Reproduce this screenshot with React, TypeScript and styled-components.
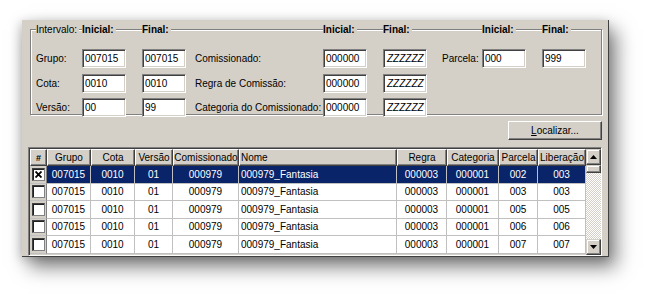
import styled, { createGlobalStyle } from "styled-components";

const GlobalStyle = createGlobalStyle`
  html, body {
    margin: 0;
    padding: 0;
    background: #ffffff;
  }
  body {
    font-family: "Liberation Sans", Arial, sans-serif;
    font-size: 10px;
    color: #000000;
  }
`;

const FACE = "#d4d0c8";
const SHADOW = "#808080";
const DARK = "#404040";
const COLS = "17px 44px 44px 38px 66px 158px 50px 52px 39px 48px";

const Page = styled.div`
  width: 652px;
  height: 299px;
  padding: 20px 0 0 22px;
  box-sizing: border-box;
  overflow: hidden;
`;

const Window = styled.div`
  width: 587px;
  height: 237px;
  box-sizing: border-box;
  background: ${FACE};
  border-right: 1px solid ${DARK};
  border-bottom: 1px solid ${DARK};
  box-shadow: 7px 10px 18px rgba(0, 0, 0, 0.5), -2px 2px 10px rgba(0, 0, 0, 0.18);
  padding: 9px 6px 0 6px;
  display: flex;
  flex-direction: column;
`;

const GroupBox = styled.div`
  margin-left: 2px;
  height: 86px;
  box-sizing: border-box;
  border: 1px solid ${SHADOW};
  box-shadow: 1px 1px 0 #ffffff, inset 1px 1px 0 #ffffff;
  padding: 0 0 0 5px;
  display: grid;
  grid-template-columns: 46px 60px 53px 128px 60px 59px 40px 60px 44px;
  grid-template-rows: 14px 20px 20px 20px;
  row-gap: 4.5px;
  align-items: center;
`;

const Legend = styled.span<{ $bold?: boolean }>`
  margin-top: -15px;
  align-self: start;
  justify-self: start;
  background: ${FACE};
  padding-right: 2px;
  white-space: nowrap;
  font-weight: ${(p) => (p.$bold ? "bold" : "normal")};
  line-height: 14px;
  position: relative;
  top: 8px;
`;

const Label = styled.span`
  white-space: nowrap;
`;

const Field = styled.div<{ $italic?: boolean }>`
  width: 44px;
  height: 19px;
  box-sizing: border-box;
  background: #ffffff;
  border: 1px solid;
  border-color: ${SHADOW} #ffffff #ffffff ${SHADOW};
  box-shadow: inset 1px 1px 0 ${DARK}, inset -1px -1px 0 ${FACE};
  padding: ${(p) => (p.$italic ? "2px 0 0 3px" : "2px 0 0 2px")};
  line-height: 14px;
  font-style: ${(p) => (p.$italic ? "italic" : "normal")};
  overflow: hidden;
  white-space: nowrap;
`;

const Toolbar = styled.div`
  display: flex;
  justify-content: flex-end;
  margin-top: 6px;
`;

const Button = styled.div`
  width: 94px;
  height: 19px;
  box-sizing: border-box;
  border: 1px solid;
  border-color: #ffffff ${DARK} ${DARK} #ffffff;
  box-shadow: inset -1px -1px 0 ${SHADOW}, inset 1px 1px 0 ${FACE};
  display: flex;
  align-items: center;
  justify-content: center;
  u {
    text-decoration: underline;
  }
`;

const Grid = styled.div`
  margin-top: 7px;
  height: 109px;
  box-sizing: border-box;
  border: 1px solid;
  border-color: ${SHADOW} #ffffff #ffffff ${SHADOW};
  box-shadow: inset 1px 1px 0 ${DARK};
  padding: 1px 0 0 1px;
  display: flex;
  background: ${FACE};
`;

const Table = styled.div`
  display: flex;
  flex-direction: column;
`;

const Row = styled.div<{ $header?: boolean }>`
  display: grid;
  grid-template-columns: ${COLS};
  height: ${(p) => (p.$header ? "17px" : "17.5px")};
`;

const HeadCell = styled.div<{ $left?: boolean; $bold?: boolean }>`
  box-sizing: border-box;
  border: 1px solid;
  border-color: #ffffff ${DARK} ${DARK} #ffffff;
  box-shadow: inset -1px -1px 0 ${SHADOW};
  display: flex;
  align-items: center;
  justify-content: ${(p) => (p.$left ? "flex-start" : "center")};
  padding-left: ${(p) => (p.$left ? "1px" : "0")};
  font-weight: ${(p) => (p.$bold ? "bold" : "normal")};
  font-size: ${(p) => (p.$bold ? "9px" : "10px")};
  white-space: nowrap;
  overflow: hidden;
`;

const Cell = styled.div<{ $left?: boolean; $selected?: boolean }>`
  box-sizing: border-box;
  background: ${(p) => (p.$selected ? "#0a246a" : "#ffffff")};
  color: ${(p) => (p.$selected ? "#ffffff" : "#000000")};
  border-right: 1px solid #c0c0c0;
  border-bottom: 1px solid #c0c0c0;
  display: flex;
  align-items: center;
  justify-content: ${(p) => (p.$left ? "flex-start" : "center")};
  padding-left: ${(p) => (p.$left ? "2px" : "0")};
  white-space: nowrap;
  overflow: hidden;
`;

const CheckCell = styled.div`
  box-sizing: border-box;
  background: ${FACE};
  border-right: 1px solid ${SHADOW};
  border-bottom: 1px solid #c0c0c0;
  display: flex;
  align-items: center;
  justify-content: center;
`;

const Box = styled.div`
  width: 13px;
  height: 13px;
  box-sizing: border-box;
  background: #ffffff;
  border: 1px solid;
  border-color: ${DARK} ${SHADOW} ${SHADOW} ${DARK};
  box-shadow: inset 1px 1px 0 #202020;
  display: flex;
  align-items: center;
  justify-content: center;
`;

const ScrollBar = styled.div`
  width: 16px;
  display: flex;
  flex-direction: column;
`;

const ArrowButton = styled.div`
  height: 16px;
  box-sizing: border-box;
  border: 1px solid;
  border-color: ${FACE} ${DARK} ${DARK} ${FACE};
  box-shadow: inset -1px -1px 0 ${SHADOW}, inset 1px 1px 0 #ffffff;
  background: ${FACE};
  display: flex;
  align-items: center;
  justify-content: center;
`;

const Thumb = styled(ArrowButton)`
  height: 8px;
`;

const Track = styled.div`
  flex: 1;
  background-color: #ece9e4;
  background-image: repeating-conic-gradient(#ffffff 0 25%, ${FACE} 0 50%);
  background-size: 2px 2px;
`;

const headers: { title: string; left?: boolean; bold?: boolean }[] = [
  { title: "#", bold: true },
  { title: "Grupo" },
  { title: "Cota" },
  { title: "Versão" },
  { title: "Comissionado" },
  { title: "Nome", left: true },
  { title: "Regra" },
  { title: "Categoria" },
  { title: "Parcela" },
  { title: "Liberação" },
];

const rows = [
  { parcela: "002", liberacao: "003", checked: true },
  { parcela: "003", liberacao: "003" },
  { parcela: "005", liberacao: "005" },
  { parcela: "006", liberacao: "006" },
  { parcela: "007", liberacao: "007" },
];

const filters = [
  { label: "Grupo:", from: "007015", to: "007015", label2: "Comissionado:" },
  { label: "Cota:", from: "0010", to: "0010", label2: "Regra de Comissão:" },
  { label: "Versão:", from: "00", to: "99", label2: "Categoria do Comissionado:" },
];

const Arrow = ({ down }: { down?: boolean }) => (
  <svg width="7" height="4" viewBox="0 0 7 4">
    <path d={down ? "M0 0H7L3.5 4Z" : "M0 4H7L3.5 0Z"} fill="#000" />
  </svg>
);

export default function App() {
  return (
    <Page>
      <GlobalStyle />
      <Window>
        <GroupBox>
          <Legend>Intervalo:</Legend>
          <Legend $bold>Inicial:</Legend>
          <Legend $bold>Final:</Legend>
          <span />
          <Legend $bold>Inicial:</Legend>
          <Legend $bold>Final:</Legend>
          <span />
          <Legend $bold>Inicial:</Legend>
          <Legend $bold>Final:</Legend>
          {filters.map((f, i) => (
            <>
              <Label key={f.label}>{f.label}</Label>
              <Field>{f.from}</Field>
              <Field>{f.to}</Field>
              <Label>{f.label2}</Label>
              <Field>000000</Field>
              <Field $italic>ZZZZZZ</Field>
              {i === 0 ? <Label>Parcela:</Label> : <span />}
              {i === 0 ? <Field>000</Field> : <span />}
              {i === 0 ? <Field>999</Field> : <span />}
            </>
          ))}
        </GroupBox>
        <Toolbar>
          <Button>
            <span>
              <u>L</u>ocalizar...
            </span>
          </Button>
        </Toolbar>
        <Grid>
          <Table>
            <Row $header>
              {headers.map((h) => (
                <HeadCell key={h.title} $left={h.left} $bold={h.bold}>
                  {h.title}
                </HeadCell>
              ))}
            </Row>
            {rows.map((r) => (
              <Row key={r.parcela}>
                <CheckCell>
                  <Box>
                    {r.checked && (
                      <svg width="7" height="7" viewBox="0 0 7 7">
                        <path d="M0.5 0.5L6.5 6.5M6.5 0.5L0.5 6.5" stroke="#000" strokeWidth="1.8" />
                      </svg>
                    )}
                  </Box>
                </CheckCell>
                <Cell $selected={r.checked}>007015</Cell>
                <Cell $selected={r.checked}>0010</Cell>
                <Cell $selected={r.checked}>01</Cell>
                <Cell $selected={r.checked}>000979</Cell>
                <Cell $selected={r.checked} $left>
                  000979_Fantasia
                </Cell>
                <Cell $selected={r.checked}>000003</Cell>
                <Cell $selected={r.checked}>000001</Cell>
                <Cell $selected={r.checked}>{r.parcela}</Cell>
                <Cell $selected={r.checked}>{r.liberacao}</Cell>
              </Row>
            ))}
          </Table>
          <ScrollBar>
            <ArrowButton>
              <Arrow />
            </ArrowButton>
            <Thumb />
            <Track />
            <ArrowButton>
              <Arrow down />
            </ArrowButton>
          </ScrollBar>
        </Grid>
      </Window>
    </Page>
  );
}
